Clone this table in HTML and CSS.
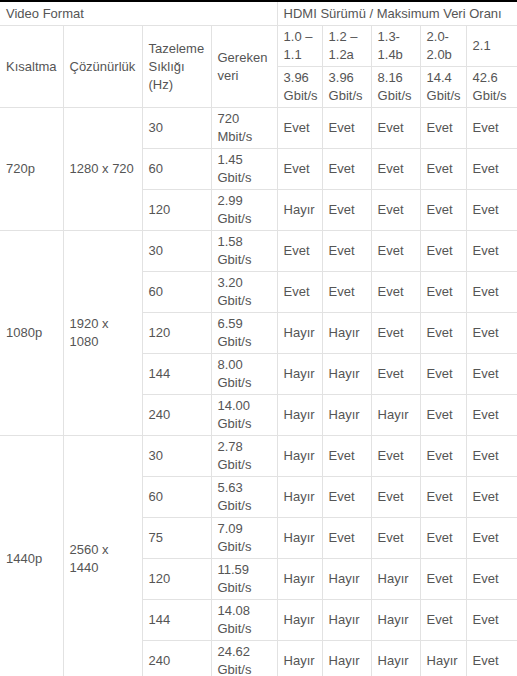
FILE: index.html
```html
<!DOCTYPE html>
<html lang="tr">
<head>
<meta charset="utf-8">
<title>HDMI</title>
<link rel="stylesheet" href="styles.css">
</head>
<body>
<div class="bar"></div>
<table class="spec">
<colgroup>
<col class="c0"><col class="c1"><col class="c2"><col class="c3"><col class="c4"><col class="c5"><col class="c6"><col class="c7"><col class="c8">
</colgroup>
<thead>
<tr class="top"><td colspan="4">Video Format</td><td colspan="5">HDMI Sürümü / Maksimum Veri Oranı</td></tr>
<tr><td rowspan="2">Kısaltma</td><td rowspan="2">Çözünürlük</td><td rowspan="2">Tazeleme Sıklığı (Hz)</td><td rowspan="2">Gereken veri</td><td>1.0 – 1.1</td><td>1.2 – 1.2a</td><td>1.3-1.4b</td><td>2.0-2.0b</td><td>2.1</td></tr>
<tr><td>3.96 Gbit/s</td><td>3.96 Gbit/s</td><td>8.16 Gbit/s</td><td>14.4 Gbit/s</td><td>42.6 Gbit/s</td></tr>
</thead>
<tbody>
<tr><td rowspan="3">720p</td><td rowspan="3">1280 x 720</td><td>30</td><td>720 Mbit/s</td><td>Evet</td><td>Evet</td><td>Evet</td><td>Evet</td><td>Evet</td></tr>
<tr><td>60</td><td>1.45 Gbit/s</td><td>Evet</td><td>Evet</td><td>Evet</td><td>Evet</td><td>Evet</td></tr>
<tr><td>120</td><td>2.99 Gbit/s</td><td>Hayır</td><td>Evet</td><td>Evet</td><td>Evet</td><td>Evet</td></tr>
<tr><td rowspan="5">1080p</td><td rowspan="5">1920 x 1080</td><td>30</td><td>1.58 Gbit/s</td><td>Evet</td><td>Evet</td><td>Evet</td><td>Evet</td><td>Evet</td></tr>
<tr><td>60</td><td>3.20 Gbit/s</td><td>Evet</td><td>Evet</td><td>Evet</td><td>Evet</td><td>Evet</td></tr>
<tr><td>120</td><td>6.59 Gbit/s</td><td>Hayır</td><td>Hayır</td><td>Evet</td><td>Evet</td><td>Evet</td></tr>
<tr><td>144</td><td>8.00 Gbit/s</td><td>Hayır</td><td>Hayır</td><td>Evet</td><td>Evet</td><td>Evet</td></tr>
<tr><td>240</td><td>14.00 Gbit/s</td><td>Hayır</td><td>Hayır</td><td>Hayır</td><td>Evet</td><td>Evet</td></tr>
<tr><td rowspan="6">1440p</td><td rowspan="6">2560 x 1440</td><td>30</td><td>2.78 Gbit/s</td><td>Hayır</td><td>Evet</td><td>Evet</td><td>Evet</td><td>Evet</td></tr>
<tr><td>60</td><td>5.63 Gbit/s</td><td>Hayır</td><td>Evet</td><td>Evet</td><td>Evet</td><td>Evet</td></tr>
<tr><td>75</td><td>7.09 Gbit/s</td><td>Hayır</td><td>Evet</td><td>Evet</td><td>Evet</td><td>Evet</td></tr>
<tr><td>120</td><td>11.59 Gbit/s</td><td>Hayır</td><td>Hayır</td><td>Hayır</td><td>Evet</td><td>Evet</td></tr>
<tr><td>144</td><td>14.08 Gbit/s</td><td>Hayır</td><td>Hayır</td><td>Hayır</td><td>Evet</td><td>Evet</td></tr>
<tr><td>240</td><td>24.62 Gbit/s</td><td>Hayır</td><td>Hayır</td><td>Hayır</td><td>Hayır</td><td>Evet</td></tr>
</tbody>
</table>
</body>
</html>
```
FILE: styles.css
```css
html, body {
  margin: 0;
  padding: 0;
  background: #fff;
  overflow: hidden;
}
body {
  font-family: "Liberation Sans", Arial, sans-serif;
  font-size: 13px;
  line-height: 18px;
  color: #555;
}
.bar {
  height: 2px;
  background: #000;
}
.spec {
  width: 517px;
  table-layout: fixed;
  border-collapse: collapse;
  border-style: hidden;
}
.spec td {
  border: 1px solid #e2e2e2;
  padding: 2px 6px;
  vertical-align: middle;
  text-align: left;
}
.spec .top td {
  padding-top: 3px;
}
.c0 { width: 63px; }
.c1 { width: 79px; }
.c2 { width: 69px; }
.c3 { width: 66px; }
.c4 { width: 45px; }
.c5 { width: 49px; }
.c6 { width: 49px; }
.c7 { width: 46px; }
.c8 { width: 51px; }
```
